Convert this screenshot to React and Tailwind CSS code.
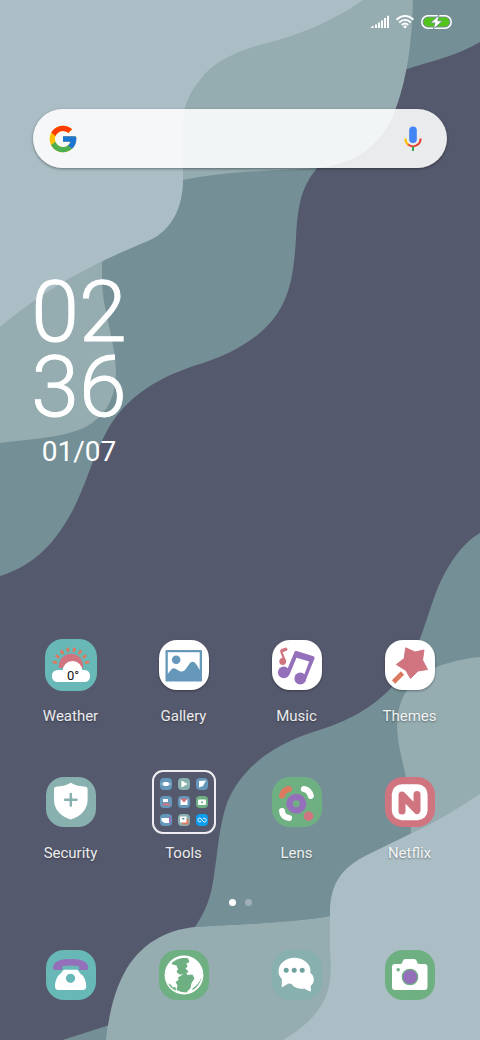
import React from "react";
import { FcGoogle } from "react-icons/fc";

const Wallpaper = () => (
    <svg
        className="absolute inset-0 h-full w-full"
        viewBox="0 0 480 1040"
        preserveAspectRatio="xMidYMid slice"
        aria-hidden="true"
    >
        <rect width="480" height="1040" fill="#55596d" />
        {/* top left waves */}
        <path
            fill="#748f95"
            d="M0 0H480V42C458 55 436 60 407 69C370 82 340 140 317 168C301 188 298 204 296 238C294 270 291 293 277 314C261 338 230 355 200 364C160 376 127 396 108 429C90 462 85 490 69 517C52 547 30 567 0 576Z"
        />
        <path
            fill="#95acb1"
            d="M413 0C412 40 408 75 396 108C384 142 360 163 318 168C270 171 226 171 183 180L102 262V283C103 310 116 345 116 372C116 395 108 412 92 423C72 437 40 438 0 443V0Z"
        />
        <path
            fill="#abbec5"
            d="M363 0C332 22 296 36 267 43C232 52 210 65 200 80C188 94 183 108 183 126V180C183 204 174 230 148 241C102 260 52 283 0 327V0Z"
        />
        {/* bottom right waves */}
        <path
            fill="#748f95"
            d="M480 533C461 544 447 566 437 590C425 620 418 660 390 689C368 712 340 724 313 732C270 746 240 770 227 803C219 826 218 850 215 868C212 893 208 908 195 927L107 1026L63 1040H480Z"
        />
        <path
            fill="#95acb1"
            d="M480 657C440 661 415 674 403 697C396 712 395 730 401 755C406 778 411 795 411 817V834L330 916C290 923 240 924 195 927C165 930 142 944 127 968C114 990 109 1014 106 1040H480Z"
        />
        <path d="M107 1026L63 1040H106Z" fill="#748f95" />
        <path d="M195 927L107 1026C112 985 126 930 195 927Z" fill="#55596d" />
        <path
            fill="#95acb1"
            d="M195 927C165 930 142 944 127 968C114 990 109 1014 106 1040H200Z"
        />
        <path d="M411 834L330 916C290 923 240 924 195 927Q300 830 411 834Z" fill="#748f95" />
        <path
            fill="#abbec5"
            d="M480 794C458 808 437 822 410 834L367 855C341 868 331 884 330 910V950C333 985 330 1012 283 1040H480Z"
        />
    </svg>
);

const StatusBar = () => (
    <header className="flex h-11 items-start justify-end gap-[7px] pt-[15px] pr-7">
        <svg width="18" height="14" viewBox="0 0 18 14" fill="#fff" aria-label="Signal">
            <path d="M0 13v-1l2.500-1.500V13zM4 9.500h2V13H4zM7 7.500h2V13H7zM10 5.500h2V13h-2zM13 3h2v10h-2zM16 .8h2V13h-2z" />
        </svg>
        <svg
            width="18"
            height="14"
            viewBox="0 0 18 14"
            fill="none"
            stroke="#fff"
            strokeWidth="2"
            aria-label="Wi-Fi"
        >
            <path d="M.6 4.800C5.500-.2 12.500-.2 17.400 4.800M3.200 7.500C6.800 4 11.200 4 14.800 7.500M5.800 10C7.800 8.200 10.200 8.200 12.200 10" />
            <circle cx="9" cy="11.800" r="1.500" fill="#fff" stroke="none" />
        </svg>
        <svg width="31" height="14" viewBox="0 0 31 14" aria-label="Battery charging">
            <rect x=".8" y=".8" width="29.400" height="12.400" rx="6.200" fill="none" stroke="#fff" strokeWidth="1.500" />
            <rect x="2.600" y="2.600" width="25.800" height="8.800" rx="4.400" fill="#52c41a" />
            <path
                d="M17.500 1L10.500 7.600H14.500L13 13L20.500 6.200H16.300Z"
                fill="#fff"
                stroke="#748f95"
                strokeWidth="1.400"
                paintOrder="stroke"
            />
        </svg>
    </header>
);

const MicIcon = () => (
    <svg width="18" height="26" viewBox="0 0 18 26" fill="none" aria-hidden="true">
        <rect x="5.200" y=".5" width="7.600" height="16.500" rx="3.800" fill="#4285f4" />
        <path d="M1.400 12.500C1.400 15.500 2.700 17.700 4.500 18.900" stroke="#fbbc05" strokeWidth="2" />
        <path d="M4.200 18.600C7 21 11 21 13.800 18.600C15.500 17.300 16.600 15.200 16.600 12.500" stroke="#ea4335" strokeWidth="2" />
        <path d="M9 20.800V25" stroke="#34a853" strokeWidth="2" />
    </svg>
);

const SearchBar = () => (
    <form
        className="mx-[33px] mt-[65px] flex h-[59px] items-center rounded-full bg-white/88 pr-[25px] pl-[14px] shadow-[0_1px_3px_rgba(0,0,0,0.4)]"
        onSubmit={(e) => e.preventDefault()}
    >
        <button type="submit" aria-label="Google search">
            <FcGoogle size={32} />
        </button>
        <input
            type="text"
            aria-label="Search"
            className="min-w-0 flex-1 bg-transparent px-3 text-base text-gray-700 outline-none"
        />
        <button type="button" aria-label="Voice search">
            <MicIcon />
        </button>
    </form>
);

const Clock = () => (
    <section className="mt-[106px] ml-9 flex w-[86px] flex-col items-center text-white">
        <time className="flex flex-col items-center text-[86px] leading-[75px] font-light [-webkit-text-stroke:1px_white]">
            <span>02</span>
            <span>36</span>
        </time>
        <time className="mt-3 text-[28px] leading-8 font-normal">01/07</time>
    </section>
);

// rounded square behind every app icon
const Tile = ({ fill, size = 50, children }) => (
    <svg
        width={size}
        height={size}
        viewBox={`0 0 ${size} ${size}`}
        className={fill === "#fff" ? "drop-shadow-[0_1px_1px_rgba(0,0,0,0.35)]" : ""}
        aria-hidden="true"
    >
        <rect width={size} height={size} rx="18" fill={fill} />
        {children}
    </svg>
);

const WeatherIcon = () => (
    <Tile fill="#67b8b7" size={52}>
        {[-77, -55, -33, -11, 11, 33, 55, 77].map((angle) => (
            <path
                key={angle}
                d="M26 11.500V9.500"
                stroke="#dc7a5f"
                strokeWidth="2.800"
                strokeLinecap="round"
                transform={`rotate(${angle} 26 27)`}
            />
        ))}
        <path d="M13.800 29V27a12 12 0 0 1 24.400 0V29z" fill="#d07480" />
        <rect x="7" y="31" width="38" height="12" rx="5.500" fill="#fff" />
        <circle cx="27.500" cy="32" r="10" fill="#fff" />
        <text x="22" y="40.500" fontSize="13" fontFamily="Roboto, sans-serif" fill="#111">
            0°
        </text>
    </Tile>
);

const GalleryIcon = () => (
    <Tile fill="#fff">
        <rect x="6.500" y="10" width="36.500" height="31.500" rx="1" fill="#6497ba" />
        <path
            d="M8.800 12.300H40.700V30C38 25 36 21.800 33.500 21.800C30.500 21.800 28.500 28 25.500 30.500C21 34 18 28 14.500 28.200C12.500 28.500 11 31 8.800 34Z"
            fill="#fff"
        />
        <circle cx="17.200" cy="19.800" r="4.300" fill="#6497ba" />
    </Tile>
);

const MusicIcon = () => (
    <Tile fill="#fff">
        <g fill="#946fba">
            <circle cx="11.800" cy="32.300" r="5.900" />
            <circle cx="28.300" cy="38.500" r="5.900" />
            <path d="M14.200 32L22.500 12Q23 10.500 24.700 11L41.500 16.300Q43 17 42.500 18.600L34.200 39L31.300 37.600L37.200 21.500L24.500 17.700L17.500 34.500Z" />
        </g>
        <circle cx="10.700" cy="21.500" r="3.400" fill="#d07480" />
        <path d="M13 21.500L9.200 11.300L14.500 9.300" fill="none" stroke="#d07480" strokeWidth="2.200" strokeLinecap="round" />
        <path d="M8.500 9.200L14.200 7.500L15 10.500L9.500 12.500Z" fill="#d07480" />
    </Tile>
);

const ThemesIcon = () => (
    <Tile fill="#fff">
        <path
            d="M20.700 7.800L30 12L39 10L37.500 20L42.500 29.500L33 31L25.500 38.500L21 30.500L11.300 24.500L19.200 18.500Z"
            fill="#d07480"
            stroke="#d07480"
            strokeLinejoin="round"
        />
        <path d="M17.500 33L8.500 42" stroke="#dc7a5f" strokeWidth="4.600" />
    </Tile>
);

const SecurityIcon = () => (
    <Tile fill="#88b0ae">
        <path
            d="M24.800 5.700C29 8.500 34.500 9.300 39.500 9.700Q41.600 10 41.600 12V23C41.600 33 34 39.500 24.800 42.600C15.500 39.500 8 33 8 23V12Q8 10 10 9.700C15 9.300 20.500 8.500 24.800 5.700Z"
            fill="#fff"
        />
        <path d="M24.800 17V28.400M19.100 22.700H30.500" stroke="#88b0ae" strokeWidth="2.500" strokeLinecap="round" />
    </Tile>
);

const LensIcon = () => (
    <Tile fill="#6fb083">
        <g fill="none" strokeWidth="6" strokeLinecap="round">
            <path d="M10 18.500Q11.500 13 17 12" stroke="#dc7a5f" />
            <path d="M31.800 12Q37.500 13 38.800 19" stroke="#fff" />
            <path d="M10 34Q10.500 40 17 41" stroke="#fff" />
        </g>
        <circle cx="24.300" cy="26.700" r="6.700" fill="none" stroke="#946fba" strokeWidth="6.600" />
        <circle cx="36.600" cy="39.200" r="4.800" fill="#d07480" />
    </Tile>
);

const NetflixIcon = () => (
    <Tile fill="#d07480">
        <rect x="6.800" y="7.300" width="35.800" height="36" rx="10" fill="#fff" />
        <path
            d="M17 34V18L32 33.500V17.500"
            fill="none"
            stroke="#d07480"
            strokeWidth="7"
            strokeLinecap="round"
            strokeLinejoin="round"
        />
    </Tile>
);

const PhoneIcon = () => (
    <Tile fill="#67b8b7">
        <path
            d="M7 17C8 10.500 17 9 24.700 9C32.500 9 41.500 10.500 42.200 17V18.500Q42 20 40.500 20H34.500Q33 20 33 18.500V16.300Q24.700 14.700 16.400 16.300V18.500Q16.400 20 15 20H8.700Q7 20 7 18.500Z"
            fill="#946fba"
        />
        <path
            d="M18.500 19.700H30.500C32.500 19.700 33 22.500 35 24C38.500 26.500 40.200 32 40.200 36Q40.200 40 37 40H12.200Q9 40 9 36C9 32 10.800 26.500 14 24C16.300 22.500 16.500 19.700 18.500 19.700Z"
            fill="#fff"
        />
        <circle cx="24.500" cy="28.300" r="4.600" fill="#67b8b7" />
    </Tile>
);

const BrowserIcon = () => (
    <Tile fill="#6fb083">
        <circle cx="25" cy="25" r="19.400" fill="#fff" />
        <g fill="#6fb083">
            <path d="M12.500 13.500C17 8.500 23 7.500 29 8.300L30.500 12L27.500 13.500L28.500 16.500L26.500 18.500L29.500 21.500L26 24.500H20.500L17.500 22L19 19L17.500 15.500L13.500 14.500Z" />
            <path d="M19 27.500L23 25L27 22.500L28.500 25L33.500 24.500L35.500 28.500L32.500 33L31.500 38L27.500 42.500Q22 42.500 17.500 40L18.500 35.500L16.500 32L19.500 30Z" />
            <path d="M42.700 27C41.500 33 38 38 32.500 40.500L34.500 37.500C38 35.500 41 31.500 42.700 27Z" />
            <path d="M8 32C10 36 13 39 17 40.800L16.500 37L13.500 37.500L12 34.500L10 34.500Z" />
        </g>
    </Tile>
);

const MessagesIcon = () => (
    <Tile fill="#88b0ae">
        <g fill="#fff">
            <ellipse cx="22.500" cy="21" rx="16" ry="13.200" />
            <path d="M10 27L9.700 37.500L19 32Z" />
            <ellipse cx="30" cy="29.500" rx="11.800" ry="9.500" />
            <path d="M38.500 34L39 41.800Q34 40 31 37.500Z" />
        </g>
        <g fill="#6fa19f">
            <circle cx="14.200" cy="20.200" r="2.500" />
            <circle cx="22.200" cy="20.200" r="2.500" />
            <circle cx="30.200" cy="20.200" r="2.500" />
        </g>
    </Tile>
);

const CameraIcon = () => (
    <Tile fill="#6fb083">
        <path
            d="M10 14H15.500Q17 14 17.500 12L18 10.500Q18.500 9 20.500 9H29Q31 9 31.500 10.500L32 12Q32.500 14 34 14H39.500Q42.500 14 42.500 17V37Q42.500 40 39.500 40H10Q7 40 7 37V17Q7 14 10 14Z"
            fill="#fff"
        />
        <circle cx="25" cy="27" r="7.700" fill="#946fba" stroke="#6fb083" strokeWidth="1.300" />
        <circle cx="13.200" cy="19.700" r="1.700" fill="#6fb083" />
    </Tile>
);

const folderApps = [
    { fill: "#6497ba", art: <path d="M3.500 4h5v4h-5zM1.500 5.500h9v1h-9z" fill="#fff" /> },
    { fill: "#88b0ae", art: <path d="M3.500 2.500L9.500 6L3.500 9.500z" fill="#fff" /> },
    { fill: "#6497ba", art: <path d="M3 3l7-.5-3 5.500-4 1.500z" fill="#fff" /> },
    {
        fill: "#6497ba",
        art: (
            <>
                <path d="M2 9.500C2 6.500 10 6 10.500 9.500z" fill="#d07480" />
                <path d="M3 3h5v3H3z" fill="#fff" />
            </>
        ),
    },
    {
        fill: "#6497ba",
        art: (
            <>
                <path d="M2.500 3h7v6h-7z" fill="#fff" />
                <path d="M2 2.500h8L6 6.500z" fill="#d07480" />
            </>
        ),
    },
    {
        fill: "#6fb083",
        art: (
            <>
                <rect x="2" y="3.500" width="8" height="5.500" rx="1" fill="#fff" />
                <circle cx="6" cy="6.200" r="1" fill="#6fb083" />
            </>
        ),
    },
    {
        fill: "#6497ba",
        art: (
            <>
                <path d="M8 3h3v6H7z" fill="#946fba" />
                <path d="M1.500 4H9v5H4.500L1.500 7z" fill="#fff" />
            </>
        ),
    },
    {
        fill: "#88b0ae",
        art: (
            <>
                <path d="M4 5h6.500v5.500H4z" fill="#dc7a5f" />
                <path d="M2 2.500h6.500v6H2z" fill="#fff" />
                <path d="M3.500 4h3.500L5.300 6z" fill="#4d9c94" />
            </>
        ),
    },
    {
        fill: "#0d9df0",
        art: (
            <path
                d="M5 7.500C2 9.500.8 4 3.500 4C6 4 6 8 8.500 8C11.200 8 10.500 3 7 4.500"
                fill="none"
                stroke="#fff"
                strokeWidth="1"
            />
        ),
    },
];

const ToolsFolder = () => (
    <div className="grid size-16 grid-cols-3 place-content-center gap-[6px] rounded-[11px] border-2 border-white/90 px-[6px]">
        {folderApps.map((app, index) => (
            <svg key={index} width="12" height="12" viewBox="0 0 12 12" aria-hidden="true">
                <rect width="12" height="12" rx="4" fill={app.fill} />
                {app.art}
            </svg>
        ))}
    </div>
);

const apps = [
    { name: "Weather", Icon: WeatherIcon },
    { name: "Gallery", Icon: GalleryIcon },
    { name: "Music", Icon: MusicIcon },
    { name: "Themes", Icon: ThemesIcon },
    { name: "Security", Icon: SecurityIcon },
    { name: "Tools", Icon: ToolsFolder },
    { name: "Lens", Icon: LensIcon },
    { name: "Netflix", Icon: NetflixIcon },
];

const dockApps = [
    { name: "Phone", Icon: PhoneIcon },
    { name: "Browser", Icon: BrowserIcon },
    { name: "Messages", Icon: MessagesIcon },
    { name: "Camera", Icon: CameraIcon },
];

const App = () => {
    return (
        <div className="relative min-h-screen overflow-hidden bg-[#55596d] font-[Roboto,sans-serif]">
            <Wallpaper />
            <div className="relative flex min-h-screen flex-col">
                <StatusBar />
                <SearchBar />
                <Clock />

                <main className="mt-auto grid grid-cols-4 gap-y-11 px-[14px]">
                    {apps.map(({ name, Icon }) => (
                        <button key={name} type="button" className="flex flex-col items-center gap-[9px]">
                            <span className="flex h-16 items-center">
                                <Icon />
                            </span>
                            <span className="text-[15px] leading-5 text-white/90 [text-shadow:0_1px_2px_rgba(0,0,0,0.4)]">
                                {name}
                            </span>
                        </button>
                    ))}
                </main>

                <div className="mt-9 flex justify-center gap-[9px]">
                    <span className="size-[7px] rounded-full bg-white"></span>
                    <span className="size-[7px] rounded-full bg-white/30"></span>
                </div>

                <nav className="mt-11 grid grid-cols-4 px-[14px] pb-10">
                    {dockApps.map(({ name, Icon }) => (
                        <button key={name} type="button" aria-label={name} className="flex justify-center">
                            <Icon />
                        </button>
                    ))}
                </nav>
            </div>
        </div>
    );
};

export default App;
